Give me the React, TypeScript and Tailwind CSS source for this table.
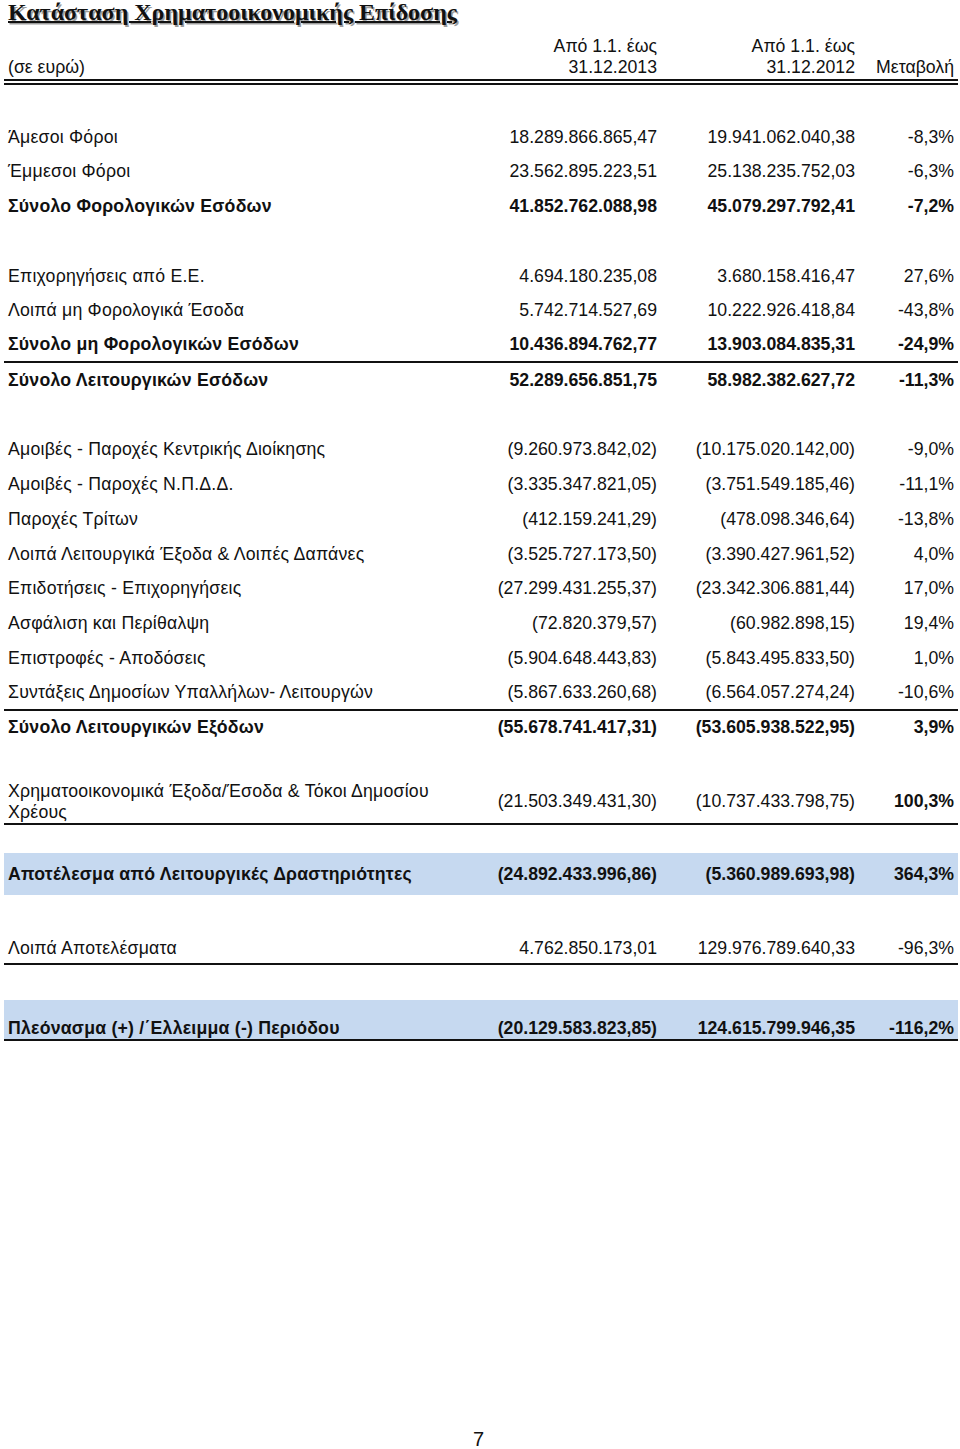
import clsx from "clsx";

type Line = {
  label: string;
  a: string;
  b: string;
  c: string;
  bold?: boolean;
  rule?: boolean;
};

const grid = "grid grid-cols-[449px_200px_198px_99px] px-1";
const labelCls = "tracking-[0.22px]";

const taxes: (Line | null)[] = [
  null,
  { label: "Άμεσοι Φόροι", a: "18.289.866.865,47", b: "19.941.062.040,38", c: "-8,3%" },
  { label: "Έμμεσοι Φόροι", a: "23.562.895.223,51", b: "25.138.235.752,03", c: "-6,3%" },
  { label: "Σύνολο Φορολογικών Εσόδων", a: "41.852.762.088,98", b: "45.079.297.792,41", c: "-7,2%", bold: true },
  null,
  { label: "Επιχορηγήσεις από Ε.Ε.", a: "4.694.180.235,08", b: "3.680.158.416,47", c: "27,6%" },
  { label: "Λοιπά μη Φορολογικά Έσοδα", a: "5.742.714.527,69", b: "10.222.926.418,84", c: "-43,8%" },
  { label: "Σύνολο μη Φορολογικών Εσόδων", a: "10.436.894.762,77", b: "13.903.084.835,31", c: "-24,9%", bold: true, rule: true },
  { label: "Σύνολο Λειτουργικών Εσόδων", a: "52.289.656.851,75", b: "58.982.382.627,72", c: "-11,3%", bold: true },
  null,
  { label: "Αμοιβές - Παροχές Κεντρικής Διοίκησης", a: "(9.260.973.842,02)", b: "(10.175.020.142,00)", c: "-9,0%" },
  { label: "Αμοιβές - Παροχές Ν.Π.Δ.Δ.", a: "(3.335.347.821,05)", b: "(3.751.549.185,46)", c: "-11,1%" },
  { label: "Παροχές Τρίτων", a: "(412.159.241,29)", b: "(478.098.346,64)", c: "-13,8%" },
  { label: "Λοιπά Λειτουργικά Έξοδα & Λοιπές Δαπάνες", a: "(3.525.727.173,50)", b: "(3.390.427.961,52)", c: "4,0%" },
  { label: "Επιδοτήσεις - Επιχορηγήσεις", a: "(27.299.431.255,37)", b: "(23.342.306.881,44)", c: "17,0%" },
  { label: "Ασφάλιση και Περίθαλψη", a: "(72.820.379,57)", b: "(60.982.898,15)", c: "19,4%" },
  { label: "Επιστροφές - Αποδόσεις", a: "(5.904.648.443,83)", b: "(5.843.495.833,50)", c: "1,0%" },
  { label: "Συντάξεις Δημοσίων Υπαλλήλων- Λειτουργών", a: "(5.867.633.260,68)", b: "(6.564.057.274,24)", c: "-10,6%", rule: true },
  { label: "Σύνολο Λειτουργικών Εξόδων", a: "(55.678.741.417,31)", b: "(53.605.938.522,95)", c: "3,9%", bold: true },
];

function Row({ line }: { line: Line | null }) {
  if (!line) return <div className="h-[34.75px]" />;
  return (
    <div
      className={clsx(
        grid,
        "h-[34.75px] items-center",
        line.bold && "font-bold",
        line.rule && "border-b-2 border-[#111]"
      )}
    >
      <div className={labelCls}>{line.label}</div>
      <div className="text-right">{line.a}</div>
      <div className="text-right">{line.b}</div>
      <div className="text-right">{line.c}</div>
    </div>
  );
}

export default function App() {
  return (
    <main className="min-h-[1449px] w-[960px] bg-white font-['Liberation_Sans',Arial,sans-serif] text-[17.7px] leading-[21px] text-[#111]">
      <h1 className="h-[25px] pl-2 font-['Liberation_Serif','Times_New_Roman',serif] text-[24px] leading-[25px] font-bold underline decoration-2 [text-shadow:1.5px_1.5px_0_#9c9c9c]">
        Κατάσταση Χρηματοοικονομικής Επίδοσης
      </h1>

      <section className="ml-1 w-[954px]">
        <div className={clsx(grid, "mt-[11px] h-[42px]")}>
          <div className="self-end">(σε ευρώ)</div>
          <div className="text-right">
            Από 1.1. έως
            <br />
            31.12.2013
          </div>
          <div className="text-right">
            Από 1.1. έως
            <br />
            31.12.2012
          </div>
          <div className="self-end text-right">Μεταβολή</div>
        </div>
        <div className="mt-[1px] h-[6px] border-y-2 border-[#111]" />

        {taxes.map((line, i) => (
          <Row key={i} line={line} />
        ))}

        <div className={clsx(grid, "mt-[35.6px] h-[44px] items-center border-b-2 border-[#111]")}>
          <div className={labelCls}>
            Χρηματοοικονομικά Έξοδα/Έσοδα & Τόκοι Δημοσίου
            <br />
            Χρέους
          </div>
          <div className="text-right">(21.503.349.431,30)</div>
          <div className="text-right">(10.737.433.798,75)</div>
          <div className="text-right font-bold">100,3%</div>
        </div>

        <div className={clsx(grid, "mt-[28.5px] h-[42px] items-center bg-[#c6d9f0] font-bold")}>
          <div className={labelCls}>Αποτέλεσμα από Λειτουργικές Δραστηριότητες</div>
          <div className="text-right">(24.892.433.996,86)</div>
          <div className="text-right">(5.360.989.693,98)</div>
          <div className="text-right">364,3%</div>
        </div>

        <div className={clsx(grid, "mt-[38.6px] h-[31.4px] items-center border-b-2 border-[#111]")}>
          <div className={labelCls}>Λοιπά Αποτελέσματα</div>
          <div className="text-right">4.762.850.173,01</div>
          <div className="text-right">129.976.789.640,33</div>
          <div className="text-right">-96,3%</div>
        </div>

        <div className={clsx(grid, "mt-[35px] h-[40.5px] items-end border-b-2 border-[#111] bg-[#c6d9f0] font-bold")}>
          <div className={labelCls}>Πλεόνασμα (+) /΄Ελλειμμα (-) Περιόδου</div>
          <div className="text-right">(20.129.583.823,85)</div>
          <div className="text-right">124.615.799.946,35</div>
          <div className="text-right">-116,2%</div>
        </div>
      </section>

      <p className="mt-[386.5px] pr-[3px] text-center text-[20px] leading-[24px]">7</p>
    </main>
  );
}
